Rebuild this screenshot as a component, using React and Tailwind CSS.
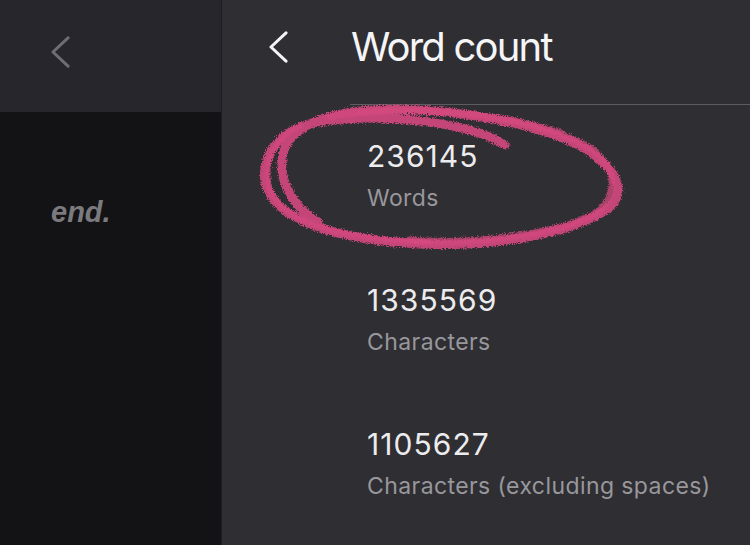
import React from "react";

function Chevron({ className, color }) {
  return (
    <svg className={className} viewBox="0 0 24 34" fill="none">
      <path d="M20 2 L4 17 L20 32" stroke={color} strokeWidth="3.2" strokeLinecap="round" strokeLinejoin="round" />
    </svg>
  );
}

function Scribble() {
  return (
    <svg className="pointer-events-none absolute left-0 top-0" width="750" height="545" viewBox="0 0 750 545">
      <defs>
        <filter id="chalk" x="-10%" y="-10%" width="120%" height="120%">
          <feTurbulence type="fractalNoise" baseFrequency="1.1" numOctaves="2" seed="3" result="n" />
          <feDisplacementMap in="SourceGraphic" in2="n" scale="6" xChannelSelector="R" yChannelSelector="G" />
        </filter>
      </defs>
      <g filter="url(#chalk)" fill="none" stroke="#d4497f" strokeLinecap="round" strokeLinejoin="round">
        <path
          strokeWidth="9"
          opacity="0.9"
          d="M505 145 C470 122 380 112 318 122 C268 132 258 170 268 190 C282 222 340 240 420 244 C500 248 585 230 612 205 C625 190 615 172 600 160 C575 135 500 115 420 110 C350 106 296 118 284 150 C276 175 290 205 318 222"
        />
        <path
          strokeWidth="7"
          opacity="0.75"
          d="M330 116 C410 104 520 112 585 145 C612 160 622 188 600 210 C570 232 480 246 410 240"
        />
        <path
          strokeWidth="5"
          opacity="0.7"
          d="M300 126 C270 140 262 168 272 195 C290 225 350 240 430 242"
        />
        <path
          strokeWidth="6"
          opacity="0.6"
          d="M360 113 C430 106 500 114 560 132"
        />
      </g>
    </svg>
  );
}

function Stat({ value, label }) {
  return (
    <div className="flex flex-col gap-[10px]">
      <div className="text-[30px] leading-[36px] tracking-[0.035em] text-[#ececee]">{value}</div>
      <div className="text-[23px] leading-[28px] tracking-[0.018em] text-[#98979c]">{label}</div>
    </div>
  );
}

export default function App() {
  return (
    <div
      className="relative flex h-[545px] w-[750px] overflow-hidden"
      style={{ fontFamily: "Inter, 'Noto Sans', sans-serif" }}
    >
      <div className="flex w-[222px] flex-col border-r border-[#1e1d22]">
        <div className="flex h-[112px] items-start bg-[#27262c] pl-[49px] pt-[36px]">
          <Chevron className="h-[32px] w-[23px]" color="#6e6d72" />
        </div>
        <div className="flex-1 bg-[#131315] pl-[51px] pt-[83px]">
          <div
            className="text-[29px] font-bold italic leading-[34px] text-[#7b7a7f]"
            style={{ fontFamily: "'Liberation Sans', Arial, sans-serif" }}
          >
            end.
          </div>
        </div>
      </div>
      <div className="flex flex-1 flex-col bg-[#2f2e33]">
        <div className="flex h-[104px] items-start">
          <div className="pl-[45px] pt-[31px]">
            <Chevron className="h-[32px] w-[23px]" color="#f4f4f6" />
          </div>
          <div className="ml-[61px] pt-[23px] text-[40px] leading-[48px] tracking-[-0.045em] text-[#f5f5f7]">
            Word count
          </div>
        </div>
        <div className="ml-[128px] h-px bg-[#5c5b60]" />
        <div className="flex flex-col gap-[70px] pl-[145px] pt-[33px]">
          <Stat value="236145" label="Words" />
          <Stat value="1335569" label="Characters" />
          <Stat value="1105627" label="Characters (excluding spaces)" />
        </div>
      </div>
      <Scribble />
    </div>
  );
}
